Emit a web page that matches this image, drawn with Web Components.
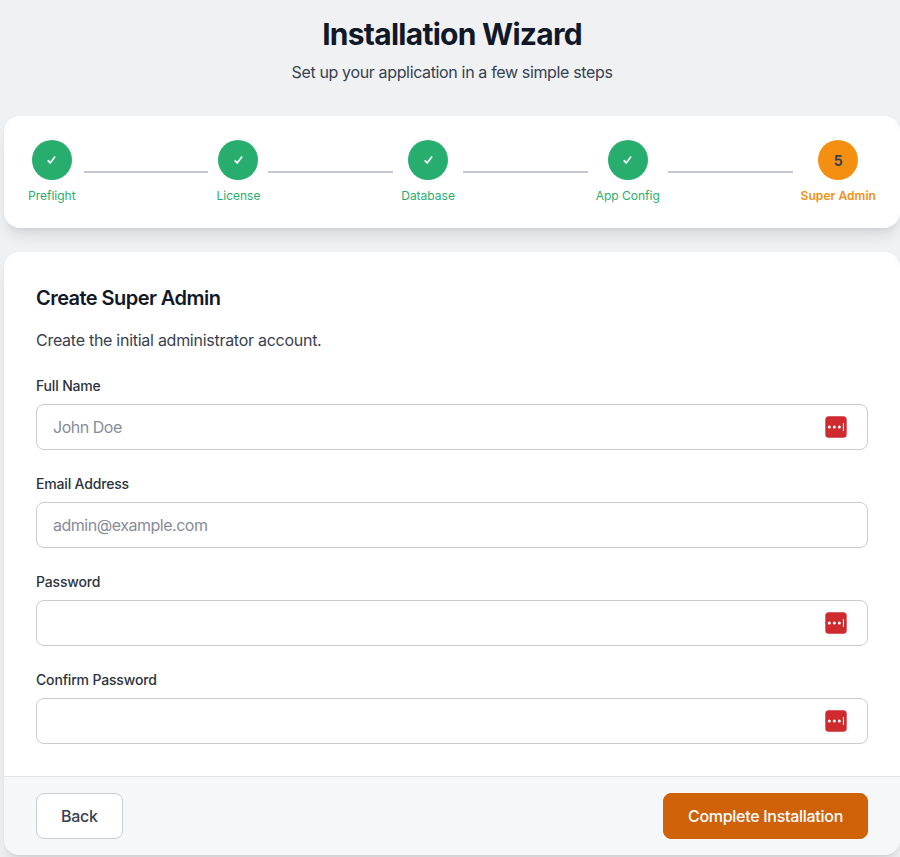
<!DOCTYPE html>
<html lang="en">
<head>
<meta charset="utf-8">
<title>Installation Wizard</title>
<style>
  html, body { margin: 0; background: #f0f1f3; }
  body { font-family: Inter, "Liberation Sans", sans-serif; color: #111827; }
</style>
</head>
<body>

<wizard-page>
  <wizard-header slot="header" title="Installation Wizard" subtitle="Set up your application in a few simple steps"></wizard-header>

  <wizard-stepper slot="stepper">
    <wizard-step state="done" label="Preflight"></wizard-step>
    <wizard-step state="done" label="License"></wizard-step>
    <wizard-step state="done" label="Database"></wizard-step>
    <wizard-step state="done" label="App Config"></wizard-step>
    <wizard-step state="active" label="Super Admin" number="5"></wizard-step>
  </wizard-stepper>

  <wizard-card slot="card" title="Create Super Admin" description="Create the initial administrator account.">
    <form-field label="Full Name" placeholder="John Doe" key-icon></form-field>
    <form-field label="Email Address" placeholder="admin@example.com" type="email"></form-field>
    <form-field label="Password" type="password" key-icon></form-field>
    <form-field label="Confirm Password" type="password" key-icon></form-field>

    <wizard-button slot="back" variant="secondary">Back</wizard-button>
    <wizard-button slot="next" variant="primary">Complete Installation</wizard-button>
  </wizard-card>
</wizard-page>

<script>
// Page frame: header, stepper and the main card stacked in flow
class WizardPage extends HTMLElement {
  constructor() {
    super();
    this.attachShadow({ mode: 'open' });
    this.shadowRoot.innerHTML = `
      <style>
        :host { display: block; box-sizing: border-box; padding: 16px 0 2px 4px; }
      </style>
      <slot name="header"></slot>
      <slot name="stepper"></slot>
      <slot name="card"></slot>
    `;
  }
}

class WizardHeader extends HTMLElement {
  constructor() {
    super();
    this.attachShadow({ mode: 'open' });
  }
  connectedCallback() {
    this.shadowRoot.innerHTML = `
      <style>
        :host { display: block; text-align: center; margin-bottom: 32px; }
        h1 { margin: 0 0 8px; font-size: 30px; line-height: 36px; font-weight: 700; letter-spacing: -.74px; color: #111827; }
        p { margin: 0; font-size: 16px; line-height: 24px; letter-spacing: -.355px; color: #374151; }
      </style>
      <h1>${this.getAttribute('title')}</h1>
      <p>${this.getAttribute('subtitle')}</p>
    `;
    this.removeAttribute('title');
  }
}

// Steps and connector lines: the line goes between each pair of steps
class WizardStepper extends HTMLElement {
  constructor() {
    super();
    this.attachShadow({ mode: 'open' });
    this.shadowRoot.innerHTML = `
      <style>
        :host {
          display: flex; align-items: center; padding: 24px;
          margin-bottom: 24px; background: #fff; border-radius: 16px;
          box-shadow: 0 10px 15px -3px rgba(0,0,0,.1), 0 4px 6px -4px rgba(0,0,0,.1);
        }
        ::slotted(.line) { flex: 1; height: 2px; margin: 0 8px; background: #c3c8d2; }
      </style>
      <slot></slot>
    `;
  }
  connectedCallback() {
    const steps = [...this.querySelectorAll('wizard-step')];
    steps.slice(0, -1).forEach(step => {
      const line = document.createElement('div');
      line.className = 'line';
      step.after(line);
    });
  }
}

class WizardStep extends HTMLElement {
  constructor() {
    super();
    this.attachShadow({ mode: 'open' });
  }
  connectedCallback() {
    const active = this.getAttribute('state') === 'active';
    const mark = active
      ? this.getAttribute('number')
      : `<svg width="9" height="8" viewBox="0 0 9 8" fill="none" stroke="#fff" stroke-width="1.7"><path d="M.7 4.4 3.2 6.9 8.1.6"/></svg>`;
    this.shadowRoot.innerHTML = `
      <style>
        :host { display: flex; flex-direction: column; align-items: center; gap: 8px; flex: none; }
        .dot {
          width: 40px; height: 40px; border-radius: 50%;
          display: flex; align-items: center; justify-content: center;
          background: ${active ? '#f39012' : '#27ae6e'};
          color: #374151; font-size: 14px; font-weight: 700;
        }
        .label {
          font-size: 12px; line-height: 16px; white-space: nowrap;
          font-weight: ${active ? 600 : 400};
          letter-spacing: ${active ? '.05px' : '0'};
          color: ${active ? '#f39012' : '#27ae6e'};
        }
      </style>
      <div class="dot">${mark}</div>
      <div class="label">${this.getAttribute('label')}</div>
    `;
  }
}

// Main card: title, description, form fields and footer with the two buttons
class WizardCard extends HTMLElement {
  constructor() {
    super();
    this.attachShadow({ mode: 'open' });
  }
  connectedCallback() {
    this.shadowRoot.innerHTML = `
      <style>
        :host {
          display: block; background: #fff; border-radius: 16px; overflow: hidden;
          box-shadow: 0 10px 15px -3px rgba(0,0,0,.1), 0 4px 6px -4px rgba(0,0,0,.1);
        }
        .body { padding: 32px; }
        h2 { margin: 0 0 16px; font-size: 20px; line-height: 28px; font-weight: 600; letter-spacing: -.55px; color: #111827; }
        p { margin: 0 0 24px; font-size: 16px; line-height: 24px; letter-spacing: -.27px; color: #374151; }
        .fields { display: flex; flex-direction: column; gap: 24px; }
        footer {
          display: flex; justify-content: space-between; padding: 16px 32px;
          background: #f6f7f9; border-top: 1px solid #e2e4e9;
        }
      </style>
      <div class="body">
        <h2>${this.getAttribute('title')}</h2>
        <p>${this.getAttribute('description')}</p>
        <div class="fields"><slot></slot></div>
      </div>
      <footer>
        <slot name="back"></slot>
        <slot name="next"></slot>
      </footer>
    `;
    this.removeAttribute('title');
  }
}

class FormField extends HTMLElement {
  constructor() {
    super();
    this.attachShadow({ mode: 'open' });
  }
  connectedCallback() {
    const icon = this.hasAttribute('key-icon') ? `
      <svg class="key" width="22" height="22" viewBox="0 0 22 22">
        <rect x="0.3" y="0.3" width="21.4" height="21.4" rx="3.5" fill="#cf2a2d"/>
        <circle cx="4.3" cy="11" r="1.5" fill="#fff"/>
        <circle cx="9.3" cy="11" r="1.5" fill="#fff"/>
        <circle cx="14.3" cy="11" r="1.5" fill="#fff"/>
        <rect x="17.9" y="7" width="1.1" height="8" fill="#fff"/>
      </svg>` : '';
    this.shadowRoot.innerHTML = `
      <style>
        :host { display: block; }
        label { display: block; margin-bottom: 8px; font-size: 14px; line-height: 20px; font-weight: 500; letter-spacing: -.17px; color: #2b3340; }
        .wrap { position: relative; }
        input {
          display: block; box-sizing: border-box; width: 100%; height: 46px;
          padding: 0 16px; border: 1px solid #c9ccd3; border-radius: 8px;
          background: #fff; outline: none; color: #111827;
          font-family: inherit; font-size: 16px; letter-spacing: -.48px;
        }
        input::placeholder { color: #868c98; opacity: 1; }
        .key { position: absolute; top: 12px; right: 21px; }
      </style>
      <label>${this.getAttribute('label')}</label>
      <div class="wrap">
        <input type="${this.getAttribute('type') || 'text'}" placeholder="${this.getAttribute('placeholder') || ''}">
        ${icon}
      </div>
    `;
  }
}

class WizardButton extends HTMLElement {
  constructor() {
    super();
    this.attachShadow({ mode: 'open' });
    this.shadowRoot.innerHTML = `
      <style>
        :host { display: block; }
        button {
          display: block; box-sizing: border-box; height: 46px; padding: 0 24px;
          border-radius: 8px; border: 1px solid #c9ccd3; background: #fff; color: #374151;
          font-family: inherit; font-size: 16px; font-weight: 500; letter-spacing: -.286px; cursor: pointer;
        }
        :host([variant="primary"]) button { border-color: #cf6208; background: #cf6208; color: #fff; }
      </style>
      <button><slot></slot></button>
    `;
  }
}

customElements.define('wizard-page', WizardPage);
customElements.define('wizard-header', WizardHeader);
customElements.define('wizard-stepper', WizardStepper);
customElements.define('wizard-step', WizardStep);
customElements.define('wizard-card', WizardCard);
customElements.define('form-field', FormField);
customElements.define('wizard-button', WizardButton);
</script>
</body>
</html>
